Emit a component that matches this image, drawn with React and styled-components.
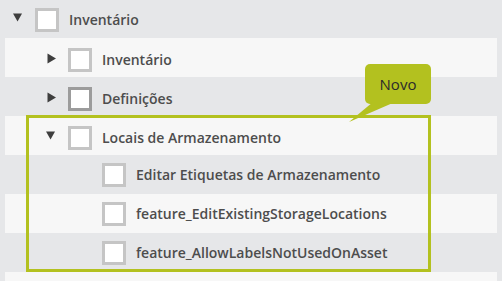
import React from 'react';
import styled, { createGlobalStyle } from 'styled-components';

const Global = createGlobalStyle`
  html, body { margin: 0; padding: 0; background: #e6e7e9; }
  body { font-family: "Open Sans", "Noto Sans", sans-serif; overflow: hidden; }
`;

const Tree = styled.div`
  width: 502px;
`;

const Children = styled.div`
  margin: 0 5px;
`;

const Group = styled.div`
  position: relative;
`;

const Row = styled.div`
  display: flex;
  align-items: flex-start;
  box-sizing: border-box;
  height: ${(p) => p.$h}px;
  padding-top: ${(p) => p.$pt}px;
  padding-left: ${(p) => p.$indent}px;
  background: ${(p) => (p.$light ? '#f7f7f7' : 'transparent')};
`;

const Toggle = styled.span`
  width: 22px;
  height: 24px;
  flex-shrink: 0;
  display: block;
  svg { display: block; }
`;

const Box = styled.span`
  width: 24px;
  height: 24px;
  box-sizing: border-box;
  flex-shrink: 0;
  background: #fff;
  border: 3px solid ${(p) => (p.$hover ? '#9c9c9c' : '#c5c5c5')};
`;

const Label = styled.span`
  margin-left: 10px;
  font-size: 14px;
  font-weight: 600;
  line-height: 24px;
  color: #4d4d4d;
  white-space: nowrap;
`;

const Highlight = styled.div`
  position: absolute;
  left: 21px;
  top: -1px;
  bottom: 0;
  width: 405px;
  box-sizing: border-box;
  border: 3px solid #b3c11f;
  pointer-events: none;
`;

const Tip = styled.div`
  position: absolute;
  left: 360px;
  top: -52px;
  width: 66px;
  height: 40px;
  box-sizing: border-box;
  padding-top: 1px;
  border-radius: 5px;
  background: #b3c11f;
  color: #2b2b2b;
  font-size: 15px;
  font-weight: 400;
  line-height: 39px;
  text-align: center;
  &::after {
    content: '';
    position: absolute;
    left: -16px;
    top: 38px;
    width: 46px;
    height: 20px;
    background: #b3c11f;
    clip-path: polygon(24px 0, 46px 0, 0 20px);
  }
`;

const Arrow = ({ open }) => (
  <Toggle>
    <svg width="22" height="24" viewBox="0 0 22 24">
      {open ? (
        <polygon points="0,5.5 9,5.5 4.5,13.5" fill="#3e3e3e" />
      ) : (
        <polygon points="1.5,5.5 1.5,15.5 10,10.5" fill="#3e3e3e" />
      )}
    </svg>
  </Toggle>
);

const Node = ({ h, pt, indent, light, toggle, hover, label }) => (
  <Row $h={h} $pt={pt} $indent={indent} $light={light}>
    {toggle ? <Arrow open={toggle === 'open'} /> : <Toggle />}
    <Box $hover={hover} />
    <Label>{label}</Label>
  </Row>
);

export default function App() {
  return (
    <>
      <Global />
      <Tree>
        <Node h={38} pt={8} indent={13} toggle="open" label="Inventário" />
        <Children>
          <Node h={39} pt={10} indent={41} light toggle="closed" label="Inventário" />
          <Node h={39} pt={10} indent={41} toggle="closed" hover label="Definições" />
          <Group>
            <Node h={39} pt={10} indent={41} light toggle="open" label="Locais de Armazenamento" />
            <Node h={39} pt={8} indent={75} label="Editar Etiquetas de Armazenamento" />
            <Node h={39} pt={8} indent={75} light label="feature_EditExistingStorageLocations" />
            <Node h={39} pt={8} indent={75} label="feature_AllowLabelsNotUsedOnAsset" />
            <Highlight />
            <Tip>Novo</Tip>
          </Group>
          <Row $h={39} $pt={10} $indent={41} $light />
        </Children>
      </Tree>
    </>
  );
}
